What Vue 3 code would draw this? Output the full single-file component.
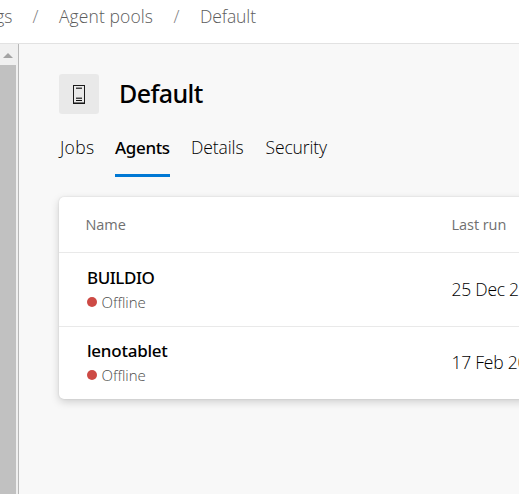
<script setup>
const tabs = [
  { label: 'Jobs', cls: 'jobs' },
  { label: 'Agents', cls: 'agents active' },
  { label: 'Details', cls: 'details' },
  { label: 'Security', cls: 'security' },
]
const agents = [
  { name: 'BUILDIO', cls: 'first', lastRun: '25 Dec 2' },
  { name: 'lenotablet', cls: 'second', lastRun: '17 Feb 20' },
]
</script>

<template>
  <div class="page">
    <header class="breadcrumb">
      <span class="crumb settings">gs</span>
      <span class="slash">/</span>
      <span class="crumb pools">Agent pools</span>
      <span class="slash">/</span>
      <span class="crumb current">Default</span>
    </header>
    <div class="body">
      <aside class="scrollbar">
        <svg class="arrow" width="10" height="5" viewBox="0 0 10 5"><path d="M0 5 L5 0 L10 5Z" fill="#a3a3a3" /></svg>
        <div class="thumb"></div>
      </aside>
      <main class="content">
        <div class="title-row">
          <div class="icon-box">
            <svg width="12" height="19" viewBox="0 0 12 19" shape-rendering="crispEdges">
              <path d="M.5 .5H11.5V18.5H.5Z" fill="none" stroke="#1a1a1a" />
              <path d="M1 17.5H11" stroke="#777" />
              <path d="M3 2.5H9M3 12.5H9" stroke="#999" />
              <path d="M3 3.5H9M3 13.5H9" stroke="#444" />
              <path d="M3 15.5H9" stroke="#111" />
            </svg>
          </div>
          <h1>Default</h1>
        </div>
        <nav class="tabs">
          <a v-for="t in tabs" :key="t.label" class="tab" :class="t.cls">{{ t.label }}</a>
        </nav>
        <section class="card">
          <div class="row head"><span class="name-head">Name</span><span class="run-head">Last run</span></div>
          <div v-for="a in agents" :key="a.name" class="row" :class="a.cls">
            <div class="agent">
              <div class="name">{{ a.name }}</div>
              <div class="status"><i class="dot"></i><span>Offline</span></div>
            </div>
            <span class="run">{{ a.lastRun }}</span>
          </div>
        </section>
      </main>
    </div>
  </div>
</template>

<style>
body { margin: 0; overflow: hidden; }
</style>
<style scoped>
.page { width: 519px; height: 494px; overflow: hidden; display: flex; flex-direction: column; background: #f8f8f8; font-family: "Open Sans", "Noto Sans", sans-serif; font-weight: 300; white-space: nowrap; color: #000; }
.breadcrumb { box-sizing: border-box; height: 44px; flex: none; display: flex; align-items: flex-start; background: #fff; color: #5c5c5c; font-size: 17.5px; line-height: 32px; }
.crumb { flex: none; }
.settings { width: 12.5px; display: flex; justify-content: flex-end; margin-right: 20px; }
.slash { width: 26.5px; flex: none; color: #808080; }
.pools { width: 114.5px; letter-spacing: .1px; }
.current { letter-spacing: -.1px; }
.body { flex: 1; display: flex; min-height: 0; border-top: 1px solid #e2e2e2; margin-top: -1px; }
.scrollbar { box-sizing: border-box; width: 19px; flex: none; background: #f0f0f0; border-right: 1px solid #b8b8b8; display: flex; flex-direction: column; }
.arrow { margin: 9px 0 7px 3px; flex: none; }
.thumb { width: 16px; flex: 1; background: #c1c1c1; }
.content { flex: 1; padding: 30px 0 0 40px; min-width: 0; }
.title-row { display: flex; align-items: center; height: 40px; }
.icon-box { width: 40px; height: 40px; border-radius: 3px; background: #e9e9e9; display: flex; align-items: center; justify-content: center; }
.icon-box svg { margin-right: 1px; }
h1 { margin: -2px 0 0 20px; font-family: "Noto Sans", "Open Sans", sans-serif; font-size: 25px; font-weight: 500; line-height: 34px; color: #000; letter-spacing: -.6px; }
.tabs { display: flex; height: 63px; }
.tab { height: 60px; line-height: 67px; font-size: 17.5px; box-sizing: border-box; flex: none; }
.tab.jobs { width: 56px; padding-left: 1px; letter-spacing: .3px; }
.tab.agents { width: 55px; margin-right: 21px; font-family: "Noto Sans", "Open Sans", sans-serif; font-weight: 500; border-bottom: 3px solid #0078d4; height: 63px; letter-spacing: -.35px; font-size: 17px; }
.tab.details { width: 74px; letter-spacing: -.1px; }
.tab.security { letter-spacing: -.12px; padding-left: .5px; }
.card { width: 600px; height: 202px; margin-top: 20px; background: #fff; border-radius: 5px; box-shadow: 0 3px 8px rgba(0,0,0,.17), 0 0 2px rgba(0,0,0,.13); }
.row { display: flex; box-sizing: border-box; align-items: center; height: 74px; border-bottom: 1px solid #e9e9e9; }
.row.head { height: 56px; color: #707070; font-size: 14.5px; font-weight: 400; letter-spacing: -.05px; }
.row.second { height: 72px; border: 0; }
.name-head { width: 366px; padding-left: 26.5px; }
.agent { width: 364.5px; padding-left: 28px; }
.name { font-family: "Noto Sans", "Open Sans", sans-serif; font-size: 17px; font-weight: 500; line-height: 24px; letter-spacing: -.25px; }
.first .name { letter-spacing: -.45px; }
.status { display: flex; align-items: center; line-height: 24px; font-size: 15px; color: #4c4c4c; letter-spacing: 0; font-variant-ligatures: none; }
.dot { width: 10px; height: 10px; border-radius: 50%; background: #cd4a45; margin-right: 4.5px; }
.run { font-size: 17.5px; letter-spacing: -.25px; margin-top: -1px; }
.second .run { margin-top: -2px; }
</style>
